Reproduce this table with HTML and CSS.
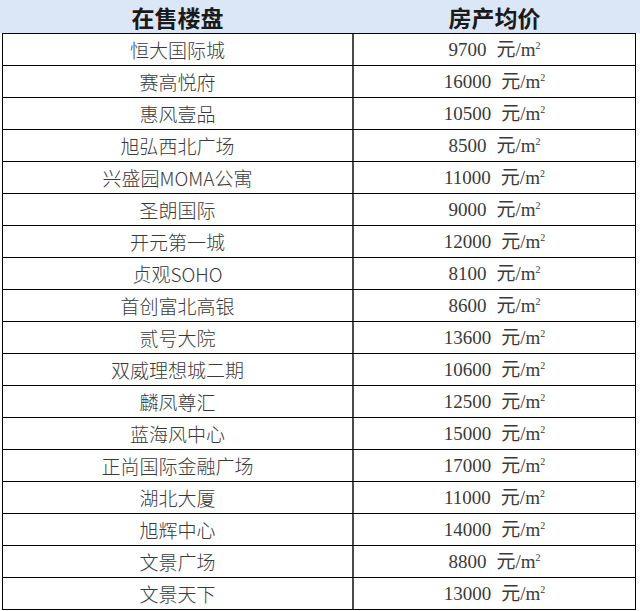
FILE: index.html
```html
<!DOCTYPE html>
<html lang="zh-CN">
<head>
<meta charset="utf-8">
<title>在售楼盘</title>
<link rel="stylesheet" href="styles.css">
</head>
<body>
<div class="head">
  <div class="hcell">在售楼盘</div>
  <div class="hcell">房产均价</div>
</div>
<div class="table">
  <div class="row"><div class="name">恒大国际城</div><div class="price"><span>9700</span><span class="unit">元/m<sup>2</sup></span></div></div>
  <div class="row"><div class="name">赛高悦府</div><div class="price"><span>16000</span><span class="unit">元/m<sup>2</sup></span></div></div>
  <div class="row"><div class="name">惠风壹品</div><div class="price"><span>10500</span><span class="unit">元/m<sup>2</sup></span></div></div>
  <div class="row"><div class="name">旭弘西北广场</div><div class="price"><span>8500</span><span class="unit">元/m<sup>2</sup></span></div></div>
  <div class="row"><div class="name">兴盛园MOMA公寓</div><div class="price"><span>11000</span><span class="unit">元/m<sup>2</sup></span></div></div>
  <div class="row"><div class="name">圣朗国际</div><div class="price"><span>9000</span><span class="unit">元/m<sup>2</sup></span></div></div>
  <div class="row"><div class="name">开元第一城</div><div class="price"><span>12000</span><span class="unit">元/m<sup>2</sup></span></div></div>
  <div class="row"><div class="name">贞观SOHO</div><div class="price"><span>8100</span><span class="unit">元/m<sup>2</sup></span></div></div>
  <div class="row"><div class="name">首创富北高银</div><div class="price"><span>8600</span><span class="unit">元/m<sup>2</sup></span></div></div>
  <div class="row"><div class="name">贰号大院</div><div class="price"><span>13600</span><span class="unit">元/m<sup>2</sup></span></div></div>
  <div class="row"><div class="name">双威理想城二期</div><div class="price"><span>10600</span><span class="unit">元/m<sup>2</sup></span></div></div>
  <div class="row"><div class="name">麟凤尊汇</div><div class="price"><span>12500</span><span class="unit">元/m<sup>2</sup></span></div></div>
  <div class="row"><div class="name">蓝海风中心</div><div class="price"><span>15000</span><span class="unit">元/m<sup>2</sup></span></div></div>
  <div class="row"><div class="name">正尚国际金融广场</div><div class="price"><span>17000</span><span class="unit">元/m<sup>2</sup></span></div></div>
  <div class="row"><div class="name">湖北大厦</div><div class="price"><span>11000</span><span class="unit">元/m<sup>2</sup></span></div></div>
  <div class="row"><div class="name">旭辉中心</div><div class="price"><span>14000</span><span class="unit">元/m<sup>2</sup></span></div></div>
  <div class="row"><div class="name">文景广场</div><div class="price"><span>8800</span><span class="unit">元/m<sup>2</sup></span></div></div>
  <div class="row"><div class="name">文景天下</div><div class="price"><span>13000</span><span class="unit">元/m<sup>2</sup></span></div></div>
</div>
</body>
</html>
```
FILE: styles.css
```css
html, body {
  margin: 0;
  padding: 0;
  background: #ffffff;
}
body {
  width: 640px;
  height: 611px;
  overflow: hidden;
  font-family: "Liberation Serif", "Noto Sans CJK SC", serif;
  color: #333;
}
.head {
  display: grid;
  grid-template-columns: 355px 1fr;
  height: 33px;
  background: #dbe7f6;
}
.hcell {
  display: flex;
  align-items: center;
  justify-content: center;
  font-family: "Noto Sans CJK SC", sans-serif;
  font-weight: bold;
  font-size: 23px;
  color: #1a1a1a;
}
.hcell:last-child {
  padding-right: 6px;
}
.table {
  margin-left: 2px;
  width: 632px;
  border-left: 1px solid #000;
  border-right: 1px solid #000;
  border-top: 1px solid #000;
}
.row {
  display: grid;
  grid-template-columns: 351px 1fr;
  height: 31px;
  border-bottom: 1px solid #000;
}
.name {
  display: flex;
  align-items: center;
  justify-content: center;
  font-size: 19px;
  font-family: "Noto Sans CJK SC", sans-serif;
  font-weight: 300;
  border-right: 2px solid #4a4a4a;
  color: #3a3a3a;
}
.price {
  display: block;
  text-align: center;
  font-size: 19px;
  line-height: 31px;
  font-family: "Liberation Serif", "Noto Sans CJK SC", serif;
  color: #3a3a3a;
}
.unit {
  margin-left: 10px;
}
.price sup {
  font-size: 10px;
  line-height: 0;
  vertical-align: 7px;
}
```
